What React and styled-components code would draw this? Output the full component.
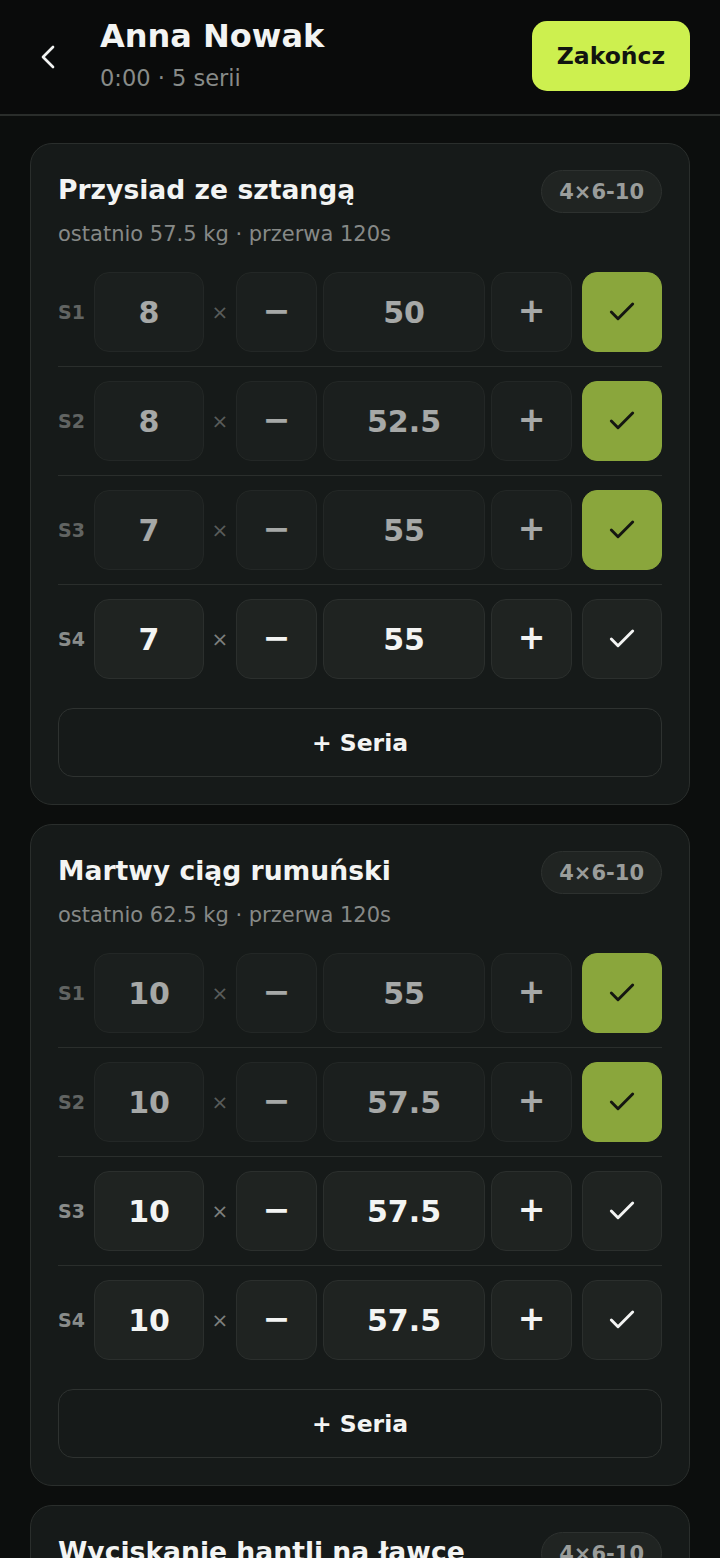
import React from "react";
import styled, { createGlobalStyle } from "styled-components";
import { ChevronLeft, Check } from "lucide-react";

const GlobalStyle = createGlobalStyle`
  body {
    margin: 0;
    background: #0c0e0d;
    font-family: "DejaVu Sans", sans-serif;
    color: #f2f3f2;
  }
  button {
    font-family: "DejaVu Sans", sans-serif;
  }
`;

const Page = styled.div`
  min-height: 1558px;
  background: #0c0e0d;
`;

const Header = styled.header`
  display: flex;
  align-items: center;
  height: 116px;
  padding: 0 30px 0 28px;
  background: #0a0b0b;
  border-bottom: 2px solid #2a2d2b;
  box-sizing: border-box;
`;

const BackButton = styled.button`
  display: flex;
  align-items: center;
  justify-content: center;
  width: 40px;
  height: 44px;
  padding: 0;
  border: none;
  background: none;
  color: #f2f3f2;
  margin-right: 32px;
  margin-top: 0;
`;

const TitleBlock = styled.div`
  flex: 1;
  display: flex;
  flex-direction: column;
  margin-top: -6px;
`;

const Title = styled.h1`
  margin: 0;
  font-size: 32px;
  line-height: 40px;
  font-weight: 700;
  color: #f3f4f3;
`;

const Meta = styled.div`
  font-size: 22.5px;
  line-height: 30px;
  margin-top: 7px;
  color: #888b89;
`;

const FinishButton = styled.button`
  height: 70px;
  width: 158px;
  margin-top: -2px;
  border: none;
  border-radius: 15px;
  background: #cdf04f;
  color: #121410;
  font-size: 23.5px;
  font-weight: 700;
`;

const List = styled.main`
  display: flex;
  flex-direction: column;
  gap: 19px;
  padding: 27px 30px 30px;
`;

const Card = styled.section`
  background: #161a19;
  border: 1px solid #2a2e2c;
  border-radius: 22px;
  padding: 26px 27px 27px;
`;

const CardHead = styled.div`
  display: flex;
  align-items: flex-start;
  justify-content: space-between;
`;

const ExerciseName = styled.h2`
  margin: 0;
  font-size: 26.6px;
  line-height: 40px;
  font-weight: 700;
  color: #f3f4f3;
`;

const Tag = styled.span`
  display: inline-flex;
  align-items: center;
  height: 43px;
  padding: 0 17px;
  border-radius: 22px;
  background: #202422;
  border: 1px solid #2d312f;
  box-sizing: border-box;
  font-size: 21px;
  font-weight: 700;
  color: #9a9d9b;
`;

const Hint = styled.div`
  margin-top: 7px;
  font-size: 21px;
  line-height: 28px;
  color: #868987;
`;

const Sets = styled.div`
  margin-top: 24px;
  display: flex;
  flex-direction: column;
`;

const SetRow = styled.div`
  display: grid;
  grid-template-columns: 30px 110px 20px 81px 162px 81px 80px;
  column-gap: 6px;
  align-items: center;
  padding: 14px 0;
  border-top: ${(p) => (p.$first ? "none" : "1px solid #2a2e2c")};
  padding-top: ${(p) => (p.$first ? "0" : "14px")};
`;

const SetLabel = styled.span`
  font-size: 19px;
  font-weight: 700;
  color: #898c8a;
  opacity: ${(p) => (p.$done ? 0.65 : 1)};
`;

const Box = styled.div`
  height: 80px;
  box-sizing: border-box;
  display: flex;
  align-items: center;
  justify-content: center;
  border-radius: 15px;
  background: #1f2321;
  border: 1px solid #2b2f2d;
  font-size: 30px;
  font-weight: 700;
  color: #f3f4f3;
  opacity: ${(p) => (p.$done ? 0.65 : 1)};
`;

const Times = styled.span`
  text-align: center;
  font-size: 20px;
  color: #7d807e;
  opacity: ${(p) => (p.$done ? 0.65 : 1)};
`;

const StepGlyph = styled.span`
  font-size: 33px;
  line-height: 1;
  margin-top: -3px;
`;

const CheckButton = styled.button`
  height: 80px;
  width: 80px;
  margin-left: 4px;
  box-sizing: border-box;
  display: flex;
  align-items: center;
  justify-content: center;
  border-radius: 15px;
  padding: 0;
  background: ${(p) => (p.$done ? "#8aa63c" : "#1f2321")};
  border: 1px solid ${(p) => (p.$done ? "#8aa63c" : "#2b2f2d")};
  color: ${(p) => (p.$done ? "#141611" : "#f3f4f3")};
`;

const AddSet = styled.button`
  margin-top: 15px;
  width: 100%;
  height: 69px;
  border-radius: 15px;
  background: #161a19;
  border: 1px solid #2e3230;
  color: #f3f4f3;
  font-size: 23.5px;
  font-weight: 700;
`;

const exercises = [
  {
    name: "Przysiad ze sztangą",
    hint: "ostatnio 57.5 kg · przerwa 120s",
    scheme: "4×6-10",
    sets: [
      { reps: 8, weight: "50", done: true },
      { reps: 8, weight: "52.5", done: true },
      { reps: 7, weight: "55", done: true },
      { reps: 7, weight: "55", done: false },
    ],
  },
  {
    name: "Martwy ciąg rumuński",
    hint: "ostatnio 62.5 kg · przerwa 120s",
    scheme: "4×6-10",
    sets: [
      { reps: 10, weight: "55", done: true },
      { reps: 10, weight: "57.5", done: true },
      { reps: 10, weight: "57.5", done: false },
      { reps: 10, weight: "57.5", done: false },
    ],
  },
  {
    name: "Wyciskanie hantli na ławce",
    hint: "ostatnio 24 kg · przerwa 90s",
    scheme: "4×6-10",
    sets: [
      { reps: 10, weight: "22", done: false },
      { reps: 10, weight: "22", done: false },
    ],
  },
];

const SetLine = ({ index, set }) => (
  <SetRow $first={index === 0}>
    <SetLabel $done={set.done}>S{index + 1}</SetLabel>
    <Box $done={set.done}>{set.reps}</Box>
    <Times $done={set.done}>×</Times>
    <Box $done={set.done}>
      <StepGlyph>−</StepGlyph>
    </Box>
    <Box $done={set.done}>{set.weight}</Box>
    <Box $done={set.done}>
      <StepGlyph>+</StepGlyph>
    </Box>
    <CheckButton $done={set.done}>
      <Check size={32} strokeWidth={2.2} />
    </CheckButton>
  </SetRow>
);

export default function App() {
  return (
    <Page>
      <GlobalStyle />
      <Header>
        <BackButton>
          <ChevronLeft size={40} strokeWidth={1.6} />
        </BackButton>
        <TitleBlock>
          <Title>Anna Nowak</Title>
          <Meta>0:00 · 5 serii</Meta>
        </TitleBlock>
        <FinishButton>Zakończ</FinishButton>
      </Header>
      <List>
        {exercises.map((ex) => (
          <Card key={ex.name}>
            <CardHead>
              <ExerciseName>{ex.name}</ExerciseName>
              <Tag>{ex.scheme}</Tag>
            </CardHead>
            <Hint>{ex.hint}</Hint>
            <Sets>
              {ex.sets.map((s, i) => (
                <SetLine key={i} index={i} set={s} />
              ))}
            </Sets>
            <AddSet>+ Seria</AddSet>
          </Card>
        ))}
      </List>
    </Page>
  );
}
